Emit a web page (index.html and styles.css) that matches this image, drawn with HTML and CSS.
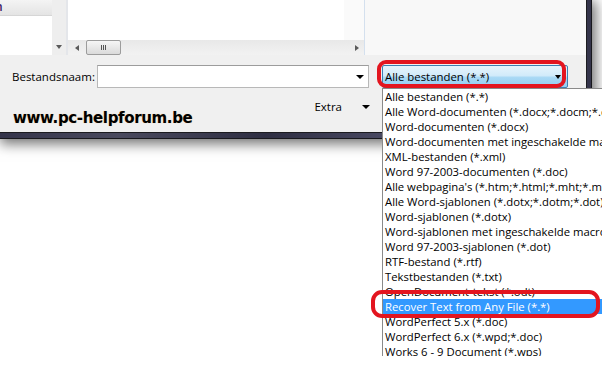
FILE: index.html
```html
<!DOCTYPE html>
<html lang="nl">
<head>
  <meta charset="UTF-8" />
  <title>Opslaan als</title>
  <link rel="stylesheet" href="styles.css">
</head>
<body>
  <div class="page">

    <!-- Dialoogvenster -->
    <div class="frame">
      <div class="dialog">
        <div class="browser">
          <div class="nav"><div class="nav-item"><span>n</span></div></div>
          <div class="vscroll"><span class="tri tri-down"></span></div>
          <div class="files">
            <div class="files-body"></div>
            <div class="hscroll">
              <span class="tri tri-left"></span>
              <span class="thumb"><i></i><i></i><i></i></span>
              <span class="track"></span>
              <span class="tri tri-right"></span>
            </div>
          </div>
          <div class="preview"></div>
        </div>

        <div class="name-row">
          <span class="label">Bestandsnaam:</span>
          <div class="input"><span class="caret"></span></div>
          <div class="combo"><span>Alle bestanden (*.*)</span><span class="caret"></span></div>
        </div>

        <div class="bottom-row">
          <div class="brand">www.pc-helpforum.be</div>
          <div class="extra">Extra <span class="caret"></span></div>
        </div>
      </div>
    </div>

    <!-- Open keuzelijst -->
    <ul class="typelist">
      <li>Alle bestanden (*.*)</li>
      <li>Alle Word-documenten (*.docx;*.docm;*.dotx;*.dotm)</li>
      <li>Word-documenten (*.docx)</li>
      <li>Word-documenten met ingeschakelde macro's (*.docm)</li>
      <li>XML-bestanden (*.xml)</li>
      <li>Word 97-2003-documenten (*.doc)</li>
      <li>Alle webpagina's (*.htm;*.html;*.mht;*.mhtml)</li>
      <li>Alle Word-sjablonen (*.dotx;*.dotm;*.dot)</li>
      <li>Word-sjablonen (*.dotx)</li>
      <li>Word-sjablonen met ingeschakelde macro's (*.dotm)</li>
      <li>Word 97-2003-sjablonen (*.dot)</li>
      <li>RTF-bestand (*.rtf)</li>
      <li>Tekstbestanden (*.txt)</li>
      <li>OpenDocument-tekst (*.odt)</li>
      <li class="selected">Recover Text from Any File (*.*)</li>
      <li>WordPerfect 5.x (*.doc)</li>
      <li>WordPerfect 6.x (*.wpd;*.doc)</li>
      <li>Works 6 - 9 Document (*.wps)</li>
    </ul>

    <!-- Rode markeringen -->
    <div class="mark mark-combo"></div>
    <div class="mark mark-recover"></div>
  </div>
</body>
</html>
```

FILE: styles.css
```css
* {
  margin: 0;
  padding: 0;
  box-sizing: border-box;
}

html, body {
  width: 602px;
  height: 371px;
  overflow: hidden;
  background: #fff;
  font-family: 'Open Sans', 'Noto Sans', sans-serif;
  font-size: 11.5px;
  color: #000;
}

.page {
  position: relative;
  width: 602px;
  height: 371px;
}

/* Vensterrand */
.frame {
  width: 592px;
  height: 139px;
  background: linear-gradient(90deg, #34344a 0%, #4a4a5e 20%, #2e2e42 45%, #50506a 70%, #34344a 100%);
  border-right: 1px solid #18181c;
  border-bottom: 1px solid #18181c;
  padding: 0 4px 5px 0;
  box-shadow: 2px 3px 12px 2px rgba(0, 0, 0, 0.55);
}

.dialog {
  width: 587px;
  height: 133px;
  background: #f0f0f0;
  border-right: 1px solid #1c1c20;
  border-bottom: 1px solid #1c1c20;
  display: flex;
  flex-direction: column;
}

/* Bovenste deel: verkenner */
.browser {
  display: flex;
  height: 55px;
}

.nav {
  width: 52px;
  background: #fff;
}

.nav-item {
  height: 16px;
  background: linear-gradient(#f4f4f4, #e4e4e4);
  border-bottom: 1px solid #d6d6d6;
  overflow: hidden;
  font-size: 12px;
  line-height: 14px;
  color: #3c1766;
}

.nav-item span {
  display: inline-block;
  margin-left: -5px;
  font-weight: 600;
}

.vscroll {
  width: 16px;
  background: #eeeeee;
  border-right: 2px solid #e4e6ea;
  display: flex;
  align-items: flex-end;
  justify-content: center;
  padding-bottom: 6px;
}

.files {
  width: 296px;
  display: flex;
  flex-direction: column;
  background: #fff;
}

.files-body {
  flex: 1;
  background: linear-gradient(90deg, #fff 0 276px, #fafafa 276px);
}

.hscroll {
  height: 15px;
  background: linear-gradient(#e8e8e8, #f2f2f2);
  display: flex;
  align-items: center;
  padding: 0 5px 0 7px;
}

.thumb {
  width: 35px;
  height: 15px;
  margin-left: 7px;
  border: 1px solid #9c9c9c;
  border-radius: 2px;
  background: linear-gradient(#f6f6f6, #dadada);
  display: flex;
  align-items: center;
  justify-content: center;
  gap: 1px;
}

.thumb i {
  width: 1px;
  height: 5px;
  background: #555;
}

.track {
  flex: 1;
}

.preview {
  flex: 1;
  border-left: 1px solid #d4e0ee;
  background: #f8f8f8;
}

/* Driehoekjes */
.tri {
  width: 0;
  height: 0;
  border: 3px solid transparent;
}

.tri-down {
  border-top: 4px solid #5a5a5a;
  border-bottom: 0;
}

.tri-left {
  border-right: 4px solid #5a5a5a;
  border-left: 0;
}

.tri-right {
  border-left: 4px solid #5a5a5a;
  border-right: 0;
}

.caret {
  width: 0;
  height: 0;
  border-left: 4px solid transparent;
  border-right: 4px solid transparent;
  border-top: 4px solid #000;
}

/* Bestandsnaam-regel */
.name-row {
  display: flex;
  align-items: center;
  margin-top: 10px;
  padding-left: 12px;
  height: 23px;
}

.label {
  width: 85px;
}

.input {
  width: 272px;
  height: 23px;
  background: #fff;
  border: 1px solid #b8b8b8;
  border-top-color: #9c9c9c;
  display: flex;
  align-items: center;
  justify-content: flex-end;
  padding-right: 4px;
}

.combo {
  width: 186px;
  height: 23px;
  margin-left: 13px;
  border: 1px solid #3c7fb1;
  border-radius: 2px;
  background: linear-gradient(#e6f4fc 0%, #d2ebfa 45%, #a9d9f5 55%, #93cdf1 100%);
  display: flex;
  align-items: center;
  justify-content: space-between;
  padding: 0 6px 0 2px;
  font-size: 11.4px;
}

.combo .caret {
  border-width: 4px 3px 0 3px;
}

/* Onderste regel */
.bottom-row {
  display: flex;
  justify-content: space-between;
  align-items: flex-start;
  margin-top: 12px;
  width: 370px;
}

.brand {
  margin: 9px 0 0 13px;
  font-family: 'DejaVu Sans', Verdana, sans-serif;
  font-weight: 700;
  font-size: 15px;
  letter-spacing: -0.35px;
  text-shadow: 0 0 1px rgba(230, 140, 30, 0.45);
}

.extra {
  display: flex;
  align-items: center;
  gap: 20px;
  margin-top: -1px;
}

.extra .caret {
  border-width: 4px 4px 0 4px;
}

/* Keuzelijst */
.typelist {
  position: absolute;
  left: 382px;
  top: 88px;
  width: 240px;
  height: 268px;
  overflow: hidden;
  list-style: none;
  background: #fff;
  border-top: 1px solid #8a8a8a;
  border-left: 1px solid #8a8a8a;
  font-size: 11.3px;
}

.typelist li {
  height: 15px;
  line-height: 15px;
  padding-left: 2px;
  white-space: nowrap;
  overflow: hidden;
  color: #000;
}

.typelist li.selected {
  background: #3399ff;
  color: #fff;
}

/* Rode omkaderingen */
.mark {
  position: absolute;
  border: 4px solid #e3151f;
}

.mark-combo {
  left: 377px;
  top: 60px;
  width: 189px;
  height: 28px;
  border-radius: 9px;
}

.mark-recover {
  left: 371px;
  top: 290px;
  width: 229px;
  height: 28px;
  border-radius: 11px;
}
```
